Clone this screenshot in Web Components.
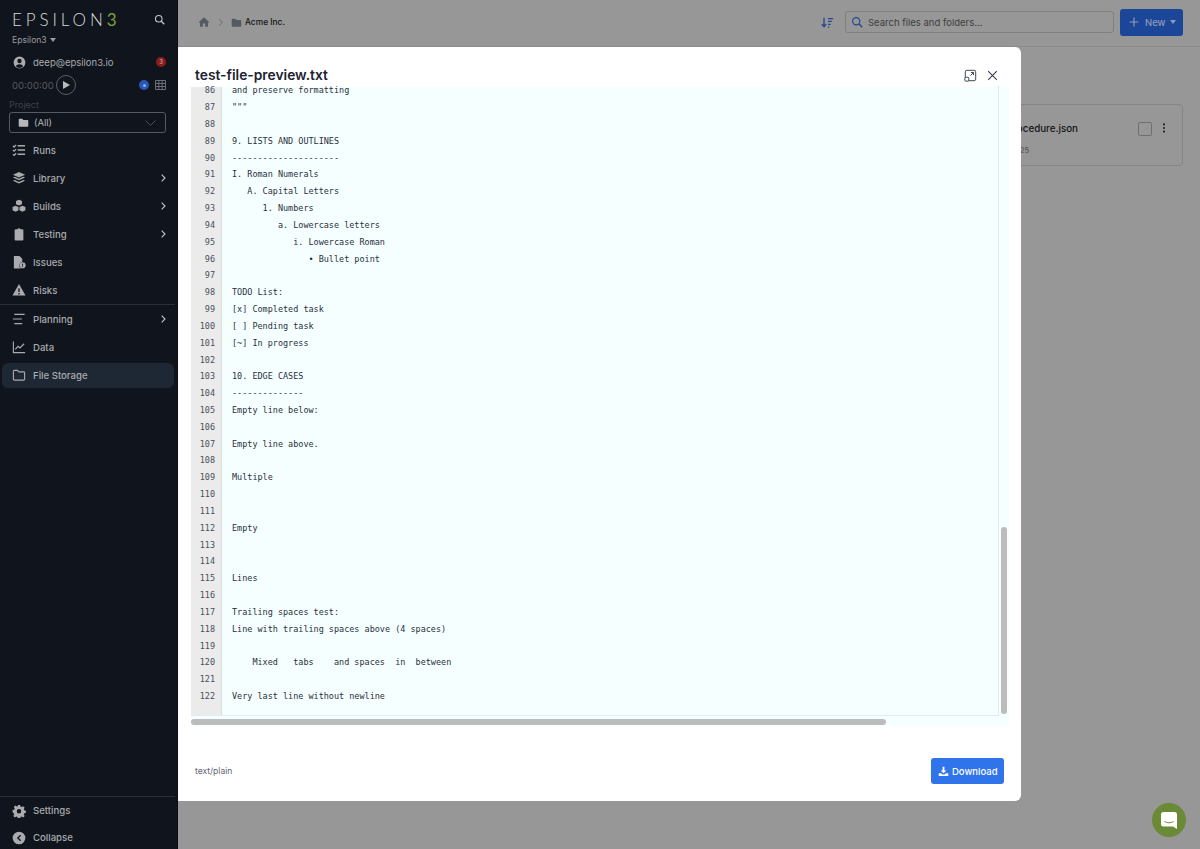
<!DOCTYPE html>
<html>
<head>
<meta charset="utf-8">
<title>File Storage</title>
<style>
  html, body { margin: 0; height: 100%; overflow: hidden; }
  body { display: flex; font-family: Inter, "Liberation Sans", sans-serif; background: #979797; }
</style>
</head>
<body>
<app-sidebar></app-sidebar>
<file-storage>
  <preview-modal filename="test-file-preview.txt" mime="text/plain"></preview-modal>
</file-storage>
<chat-launcher></chat-launcher>

<script>
// --- Icons ---
const ICONS = {
  runs: '<path d="M1 3l1.300 1.300L4.400 2M1 7.500l1.300 1.300 2.100-2.300M1 12l1.300 1.300 2.100-2.300" fill="none" stroke="currentColor" stroke-width="1.300"/><path d="M6 3h8M6 7.500h8M6 12h8" stroke="currentColor" stroke-width="1.500"/>',
  library: '<path d="M7.500 1l6.500 3-6.500 3L1 4z"/><path d="M1 7l2-.9 4.500 2.100L12 6.100l2 .9-6.500 3z"/><path d="M1 10.500l2-.9 4.500 2.100 4.500-2.100 2 .9-6.500 3z"/>',
  builds: '<path d="M7.500 .8l3.200 1.400v3.400l-3.200 1.400-3.200-1.400V2.200z"/><path d="M3.800 7.300l3.200 1.400v3.400l-3.200 1.600L.6 12.100V8.700z"/><path d="M11.200 7.300l3.200 1.400v3.400l-3.200 1.600L8 12.100V8.700z"/>',
  testing: '<path d="M4 2.500h1.800a1.800 1.800 0 0 1 3.400 0H11a1.200 1.200 0 0 1 1.200 1.200v9.600a1.200 1.200 0 0 1-1.200 1.200H4a1.200 1.200 0 0 1-1.200-1.200V3.700A1.200 1.200 0 0 1 4 2.500z"/>',
  issues: '<path d="M2 1h6l3 3v3.200a4 4 0 0 0-1.500 7.300H2z"/><circle cx="11.300" cy="11" r="3.300"/><path d="M11.300 9.300v2.200M11.300 12v.8" stroke="#10141c" stroke-width="1"/>',
  risks: '<path d="M7.500 1.200l7 12.300H.5z"/><path d="M7.500 5.500v4.200M7.500 10.800v1.400" stroke="#10141c" stroke-width="1.400"/>',
  planning: '<path d="M2.500 2.500h11M1 7.500h9.500M2.500 12.500h8.500" fill="none" stroke="currentColor" stroke-width="1.300"/>',
  data: '<path d="M1.500 1.500v12h12.500" fill="none" stroke="currentColor" stroke-width="1.200"/><path d="M3.500 10l3-3.300 2 1.800 4.500-4.500" fill="none" stroke="currentColor" stroke-width="1.300"/>',
  folderOpen: '<path d="M1.500 3.500a1 1 0 0 1 1-1h3.300l1.500 1.700h5.200a1 1 0 0 1 1 1v6.800a1 1 0 0 1-1 1h-10a1 1 0 0 1-1-1z" fill="none" stroke="currentColor" stroke-width="1.200"/>',
  folder: '<path d="M1 3.500a1 1 0 0 1 1-1h3.800l1.500 1.700H13a1 1 0 0 1 1 1v7a1 1 0 0 1-1 1H2a1 1 0 0 1-1-1z"/>',
  settings: '<path fill-rule="evenodd" d="M6.300 1h2.400l.4 1.800 1.200.5 1.600-1 1.700 1.700-1 1.600.5 1.200 1.800.4v2.400l-1.800.4-.5 1.200 1 1.600-1.700 1.700-1.600-1-1.200.5-.4 1.800H6.300l-.4-1.800-1.200-.5-1.600 1-1.700-1.700 1-1.600-.5-1.200L.6 8.900V6.500l1.800-.4.5-1.200-1-1.600 1.700-1.700 1.600 1 1.200-.5zM7.500 5.300a2.400 2.400 0 1 0 0 4.800 2.400 2.400 0 0 0 0-4.800z"/>',
  collapse: '<path fill-rule="evenodd" d="M7.500.7a6.800 6.800 0 1 1 0 13.600 6.800 6.800 0 0 1 0-13.600zM8.800 4L5.300 7.500 8.800 11l1-1-2.500-2.500L9.800 5z"/>',
  chevron: '<path d="M5.500 2.500l5 5-5 5" fill="none" stroke="currentColor" stroke-width="1.600"/>',
  user: '<path fill-rule="evenodd" d="M7.500.7a6.800 6.800 0 1 1 0 13.600 6.800 6.800 0 0 1 0-13.600zM7.500 3.300a2.500 2.500 0 1 0 0 5 2.500 2.500 0 0 0 0-5zM3.300 11.900a5.600 5.600 0 0 0 8.400 0c-.6-1.400-2-2.300-4.200-2.300s-3.600.9-4.200 2.300z"/>',
  search: '<circle cx="6.500" cy="6.500" r="4.500" fill="none" stroke="currentColor" stroke-width="1.500"/><path d="M10 10l4 4" stroke="currentColor" stroke-width="1.800"/>',
  home: '<path d="M7.500 1.500L14.500 8h-2v5.500H9v-4H6v4H2.500V8h-2z"/>',
  sort: '<path d="M3.500 2v10M1 9.500L3.500 12.500 6 9.500" fill="none" stroke="currentColor" stroke-width="1.500"/><path d="M8 3h6M8 6.300h4.500M8 9.600h3M8 12.800h1.500" stroke="currentColor" stroke-width="1.400"/>',
  plus: '<path d="M7.500 2v11M2 7.500h11" stroke="currentColor" stroke-width="1.500"/>',
  expand: '<rect x="1.500" y="1.500" width="12" height="12" rx="1.800" fill="none" stroke="currentColor" stroke-width="1.100"/><rect x="1" y="9.500" width="4.500" height="4.500" rx="1" fill="#fff" stroke="currentColor" stroke-width="1.100"/><path d="M7.500 7.500l3.300-3.300M8 4h3v3" fill="none" stroke="currentColor" stroke-width="1.100"/>',
  close: '<path d="M2.500 2.500l10 10M12.500 2.500l-10 10" stroke="currentColor" stroke-width="1.300"/>',
  download: '<path d="M6.200 1h2.600v5h2.600L7.500 10 3.600 6h2.600z"/><path d="M1 10h3.500l1.500 1.500h3L10.500 10H14v3.800H1z"/>',
  kebab: '<circle cx="7.500" cy="3" r="1.300"/><circle cx="7.500" cy="7.500" r="1.300"/><circle cx="7.500" cy="12" r="1.300"/>',
  table: '<path d="M.5.5h10v9H.5zM.5 3.500h10M.5 6.500h10M3.800.5v9M7.200.5v9" fill="none" stroke="currentColor"/>',
};
const icon = (name, size = 15) =>
  `<svg width="${size}" height="${size}" viewBox="0 0 15 15" fill="currentColor" aria-hidden="true" style="flex:none;display:block">${ICONS[name]}</svg>`;

// --- Sidebar ---
class NavItem extends HTMLElement {
  connectedCallback() {
    const sub = this.hasAttribute('sub');
    this.attachShadow({ mode: 'open' }).innerHTML = `
      <style>
        :host { display: flex; align-items: center; height: 28px; padding: 0 7px 0 12px; gap: 7px;
                margin: 0 2px 0 0; color: #a9abaf; font-size: 9.600px; font-weight: 500; box-sizing: border-box; }
        :host([active]) { background: #1d2834; border-radius: 6px; height: 25px; margin: 1.500px 3px 1.500px 2px; padding-left: 10px; }
        :host([compact]) { height: 27px; }
        .label { flex: 1; }
        .arrow { color: #c6c8cb; }
      </style>
      ${icon(this.getAttribute('icon'), 14)}
      <span class="label"><slot></slot></span>
      ${sub ? `<span class="arrow">${icon('chevron', 10)}</span>` : ''}
    `;
  }
}
customElements.define('nav-item', NavItem);

class AppSidebar extends HTMLElement {
  connectedCallback() {
    this.attachShadow({ mode: 'open' }).innerHTML = `
      <style>
        :host { display: flex; flex-direction: column; flex: none; width: 178px; height: 851px; box-sizing: border-box;
                background: #10141c; color: #a9abaf; border-right: 1px solid #0a0c11; }
        .brand { display: flex; align-items: center; justify-content: space-between; height: 30px; padding: 4px 12px 0; }
        .logo { font-family: Lato, Inter, sans-serif; font-weight: 300; font-size: 17px; letter-spacing: 3.900px; color: #d7d9dc; line-height: 1; }
        .logo b { font-weight: 400; color: #7da33c; }
        .search { color: #c4c6c9; }
        .org { font-size: 8.600px; padding: 0 12px; height: 12px; line-height: 12px; display: flex; gap: 3px; align-items: center; color: #9b9da1; }
        .caret { width: 0; height: 0; border: 3px solid transparent; border-top: 4px solid #9b9da1; border-bottom: 0; }
        .account { display: flex; align-items: center; gap: 7px; padding: 0 11px 0 13px; height: 20px; margin-top: 6px; font-size: 9.500px; color: #a9abaf; }
        .account span.mail { flex: 1; }
        .badge { width: 10px; height: 10px; border-radius: 50%; background: #8a1c1c; color: #d7b3b3; font-size: 6px; text-align: center; line-height: 10px; }
        .timer { display: flex; align-items: center; height: 24px; margin-top: 1px; padding: 0 11px 0 12px; font-size: 9.600px; color: #55585e; gap: 2px; }
        .play { width: 20px; height: 20px; border: 1px solid #5c5f65; border-radius: 50%; display: flex; align-items: center; justify-content: center; box-sizing: border-box; }
        .play i { width: 0; height: 0; border: 4px solid transparent; border-left: 7px solid #b9bbbe; border-right: 0; margin-left: 1px; }
        .spacer { flex: 1; }
        .live { width: 10px; height: 10px; border-radius: 50%; background: #2a57b5; margin-right: 4px; display: flex; align-items: center; justify-content: center; }
        .live i { width: 3px; height: 3px; border-radius: 50%; background: #8fb0ee; }
        .grid { color: #6c6f75; }
        .project { font-size: 9px; color: #3f4249; padding: 0 9px; margin-top: 2px; height: 12px; line-height: 12px; }
        .select { display: flex; align-items: center; gap: 5px; height: 21px; margin: 1px 11px 0 9px; padding: 0 9px 0 8px; border: 1px solid #565b63; border-radius: 3px;
                  font-size: 9.500px; color: #b5b7ba; box-sizing: border-box; }
        .select span { flex: 1; }
        .select svg.down { color: #4d5157; }
        nav { margin-top: 3px; }
        hr { border: 0; height: 1px; background: #2b3038; margin: 0 2px 0 0; flex: none; }
        .rest { flex: 1; }
      </style>
      <div class="brand">
        <span class="logo">EPSILON<b>3</b></span>
        <span class="search">${icon('search', 11)}</span>
      </div>
      <div class="org">Epsilon3 <i class="caret"></i></div>
      <div class="account">${icon('user', 13)}<span class="mail">deep@epsilon3.io</span><span class="badge">3</span></div>
      <div class="timer">00:00:00 <span class="play"><i></i></span><span class="spacer"></span><span class="live"><i></i></span><span class="grid"><svg width="11" height="10" viewBox="0 0 11 10" style="display:block">${ICONS.table}</svg></span></div>
      <div class="project">Project</div>
      <div class="select">${icon('folder', 11)}<span>(All)</span>
        <svg class="down" width="11" height="6" viewBox="0 0 11 6"><path d="M.5.5l5 5 5-5" fill="none" stroke="currentColor"/></svg></div>
      <nav>
        <nav-item icon="runs">Runs</nav-item>
        <nav-item icon="library" sub>Library</nav-item>
        <nav-item icon="builds" sub>Builds</nav-item>
        <nav-item icon="testing" sub>Testing</nav-item>
        <nav-item icon="issues">Issues</nav-item>
        <nav-item icon="risks">Risks</nav-item>
        <hr>
        <nav-item icon="planning" sub>Planning</nav-item>
        <nav-item icon="data">Data</nav-item>
        <nav-item icon="folderOpen" active>File Storage</nav-item>
      </nav>
      <div class="rest"></div>
      <hr>
      <nav-item icon="settings" compact>Settings</nav-item>
      <nav-item icon="collapse" compact>Collapse</nav-item>
    `;
  }
}
customElements.define('app-sidebar', AppSidebar);

// --- Main area, already in its dimmed colours behind the modal ---
class FileStorage extends HTMLElement {
  connectedCallback() {
    this.attachShadow({ mode: 'open' }).innerHTML = `
      <style>
        :host { display: flex; flex-direction: column; flex: 1; min-width: 0; position: relative; height: 849px; background: #979797; }
        header { display: flex; align-items: center; height: 44px; border-bottom: 1px solid #8b8b8b; padding: 0 17px 2px 20px; }
        .crumbs { display: flex; align-items: center; flex: 1; gap: 3px; color: #565a62; }
        .crumbs b { font-size: 8.400px; font-weight: 500; color: #141414; }
        .crumbs .sep { color: #666; margin: 0 3px; }
        .sort { color: #24478f; margin-right: 11px; }
        .search { display: flex; align-items: center; gap: 5px; width: 269px; height: 22px; box-sizing: border-box; padding: 0 5px;
                  border: 1px solid #808080; border-radius: 3px; font-size: 9.500px; color: #3d3d3d; }
        .search svg { color: #24478f; }
        .new { display: flex; align-items: center; gap: 5px; height: 27px; width: 63px; box-sizing: border-box; margin-left: 6px; padding-left: 8px;
               background: #1c4698; border-radius: 3px; color: #8c9bb8; font-size: 9.500px; font-weight: 500; }
        .caret { width: 0; height: 0; border: 3.500px solid transparent; border-top: 4px solid #8c9bb8; border-bottom: 0; }
        .files { display: flex; justify-content: flex-end; padding: 57px 17px 0 0; }
        .card { display: flex; width: 350px; height: 62px; box-sizing: border-box; border: 1px solid #858585; border-radius: 4px; padding: 17px 12px 0 0; color: #141414; }
        .info { flex: 1; text-align: right; padding-right: 60px; font-size: 9.800px; font-weight: 500; line-height: 13px; }
        .info small { display: block; text-align: left; padding-left: 186px; margin-top: 9px; font-size: 7.500px; font-weight: 400; color: #4c4c4c; }
        .check { width: 14px; height: 14px; box-sizing: border-box; border: 1px solid #6f6f6f; border-radius: 2px; margin-right: 6px; }
        .kebab { color: #202020; }
        .overlay { position: absolute; left: 0; top: 0; bottom: 0; width: 843px; padding-top: 47px; box-sizing: border-box; }
      </style>
      <header>
        <div class="crumbs">${icon('home', 12)}<span class="sep">${icon('chevron', 9)}</span>${icon('folder', 11)}<b>Acme Inc.</b></div>
        <span class="sort">${icon('sort', 13)}</span>
        <div class="search">${icon('search', 12)}<span>Search files and folders...</span></div>
        <div class="new">${icon('plus', 12)}<span>New</span><i class="caret"></i></div>
      </header>
      <div class="files">
        <div class="card">
          <div class="info">test-procedure.json<small>25</small></div>
          <span class="check"></span>
          <span class="kebab">${icon('kebab', 12)}</span>
        </div>
      </div>
      <div class="overlay"><slot></slot></div>
    `;
  }
}
customElements.define('file-storage', FileStorage);

// --- Text preview ---
const PREVIEW_LINES = [
  [86, 'and preserve formatting'],
  [87, '"""'],
  [88, ''],
  [89, '9. LISTS AND OUTLINES'],
  [90, '---------------------'],
  [91, 'I. Roman Numerals'],
  [92, '   A. Capital Letters'],
  [93, '      1. Numbers'],
  [94, '         a. Lowercase letters'],
  [95, '            i. Lowercase Roman'],
  [96, '               • Bullet point'],
  [97, ''],
  [98, 'TODO List:'],
  [99, '[x] Completed task'],
  [100, '[ ] Pending task'],
  [101, '[~] In progress'],
  [102, ''],
  [103, '10. EDGE CASES'],
  [104, '--------------'],
  [105, 'Empty line below:'],
  [106, ''],
  [107, 'Empty line above.'],
  [108, ''],
  [109, 'Multiple'],
  [110, ''],
  [111, ''],
  [112, 'Empty'],
  [113, ''],
  [114, ''],
  [115, 'Lines'],
  [116, ''],
  [117, 'Trailing spaces test:'],
  [118, 'Line with trailing spaces above (4 spaces)'],
  [119, ''],
  [120, '    Mixed   tabs    and spaces  in  between'],
  [121, ''],
  [122, 'Very last line without newline'],
];

class CodeView extends HTMLElement {
  connectedCallback() {
    const rows = PREVIEW_LINES.map(([n, text]) =>
      `<div class="row"><span class="num">${n}</span><span class="txt">${text.replace(/</g, '&lt;')}</span></div>`).join('');
    this.attachShadow({ mode: 'open' }).innerHTML = `
      <style>
        :host { display: grid; grid-template-columns: 1fr 10px; grid-template-rows: 1fr 10px; flex: 1; min-height: 0;
                background:
                  linear-gradient(#fff 0 2px, transparent 2px),
                  linear-gradient(#f5ffff, #f5ffff); }
        .view { overflow: hidden; background: linear-gradient(#fff 0 2px, transparent 2px), linear-gradient(90deg, #ebebeb 30px, #dcdcdc 30px 31px, transparent 31px);
                border-right: 1px solid #e2eeee; border-bottom: 1px solid #e2eeee; }
        .row { display: flex; height: 16.840px; font: 8.470px/16.840px "DejaVu Sans Mono", "Liberation Mono", monospace; color: #2a303c; white-space: pre; }
        .row:first-child { height: 10px; line-height: 10px; margin-bottom: 4.100px; }
        .num { width: 24px; text-align: right; color: #4a4f59; flex: none; }
        .txt { margin-left: 17px; }
        .vtrack { padding: 442px 2px 2px 2px; }
        .vtrack i { display: block; height: 100%; border-radius: 3px; background: #bcbcbc; }
        .htrack { padding: 3px 113px 1px 0; }
        .htrack i { display: block; height: 100%; border-radius: 3px; background: #bcbcbc; }
      </style>
      <div class="view">${rows}</div>
      <div class="vtrack"><i></i></div>
      <div class="htrack"><i></i></div>
    `;
  }
}
customElements.define('code-view', CodeView);

class PreviewModal extends HTMLElement {
  connectedCallback() {
    this.attachShadow({ mode: 'open' }).innerHTML = `
      <style>
        :host { display: flex; flex-direction: column; width: 843px; height: 754px; box-sizing: border-box; background: #fff;
                border-radius: 0 6px 6px 0; padding: 0 12px 0 13px; color: #1c2331; }
        .head { display: flex; align-items: center; height: 38px; padding: 0 10px 0 4px; gap: 9px; flex: none; }
        h2 { flex: 1; margin: 18px 0 0; font-size: 13.800px; font-weight: 600; }
        .head span { color: #39404e; margin-top: 18px; }
        .foot { display: flex; align-items: center; justify-content: space-between; flex: none; height: 75px; box-sizing: border-box; padding: 15px 5px 0 4px; }
        .mime { font-size: 8.500px; color: #5e6470; }
        button { display: flex; align-items: center; gap: 3px; height: 26px; width: 73px; box-sizing: border-box; padding: 0 0 0 7px; border: 0; border-radius: 3px;
                 background: #2f74ea; color: #fff; font: 500 9.500px Inter, sans-serif; }
      </style>
      <div class="head">
        <h2>${this.getAttribute('filename')}</h2>
        <span>${icon('expand', 13)}</span>
        <span>${icon('close', 13)}</span>
      </div>
      <code-view></code-view>
      <div class="foot">
        <span class="mime">${this.getAttribute('mime')}</span>
        <button>${icon('download', 11)}Download</button>
      </div>
    `;
  }
}
customElements.define('preview-modal', PreviewModal);

class ChatLauncher extends HTMLElement {
  connectedCallback() {
    this.attachShadow({ mode: 'open' }).innerHTML = `
      <style>
        :host { position: fixed; left: 1152px; top: 803px; width: 34px; height: 34px; border-radius: 50%; background: #6b8a35;
                display: flex; align-items: center; justify-content: center; }
      </style>
      <svg width="16" height="17" viewBox="0 0 16 17">
        <path d="M2.500 0h11A2.500 2.500 0 0 1 16 2.500V17l-4-2.500H2.500A2.500 2.500 0 0 1 0 12V2.500A2.500 2.500 0 0 1 2.500 0z" fill="#fff"/>
        <path d="M3.500 9.500c2.500 1.700 6.500 1.700 9 0" fill="none" stroke="#6b8a35" stroke-width="1"/>
      </svg>
    `;
  }
}
customElements.define('chat-launcher', ChatLauncher);
</script>
</body>
</html>
